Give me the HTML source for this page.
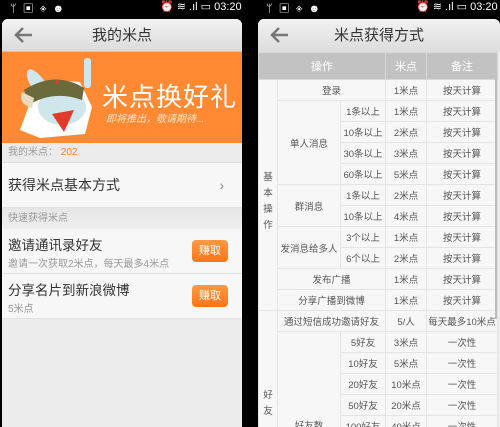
<!DOCTYPE html>
<html><head><meta charset="utf-8"><style>
*{margin:0;padding:0;box-sizing:border-box}
body{width:500px;height:427px;background:#000;position:relative;overflow:hidden;font-family:"Liberation Sans","Noto Sans CJK SC",sans-serif}
.sb{position:absolute;top:0;height:18px;color:#fff;font-size:12px}
.panel{position:absolute;top:19px;bottom:0;background:#ececec;border-radius:6px 6px 0 0;overflow:hidden}
.tb{height:33px;background:linear-gradient(#f2f2f2,#dcdcdc);border-bottom:1px solid #c8c8c8;position:relative;text-align:center;font-size:15px;line-height:33px;color:#333}
.back{position:absolute;left:10px;top:6px}
.banner{height:91px;background:#ff8a33;position:relative;overflow:hidden}
.row{background:#f7f7f7;border-bottom:1px solid #e2e2e2;position:relative}
.btn{position:absolute;right:14px;top:11px;width:36px;height:22px;border-radius:4px;background:linear-gradient(#ff9a40,#fb7418);color:#fff;font-size:11px;line-height:22px;text-align:center}
table{border-collapse:collapse;width:239px;font-size:9.5px;color:#555;text-align:center;table-layout:fixed}
td,th{border:1px solid #e4e4e4;height:21px;padding:0;background:#f7f7f7;font-weight:normal;white-space:nowrap;overflow:hidden}
th{background:#c2c2c2;color:#fff;height:27px;font-size:11px;border-color:#d8d8d8}
</style></head><body>
<div class="sb" style="left:10px;width:240px;font-size:11px">ᛘ &nbsp;▣ &nbsp;◈ &nbsp;☻<span style="position:absolute;left:150px">⏰ ≋ .ıl ▭ 03:20</span></div>
<div class="sb" style="left:266px;width:234px;font-size:11px">ᛘ &nbsp;▣ &nbsp;◈ &nbsp;☻<span style="position:absolute;left:150px">⏰ ≋ .ıl ▭ 03:20</span></div>

<div class="panel" style="left:2px;width:240px">
 <div class="tb"><svg class="back" width="22" height="20"><path d="M20 10H4M11 3L4 10l7 7" stroke="#777" stroke-width="2.5" fill="none"/></svg>我的米点</div>
 <div class="banner">
  <svg width="100" height="91" style="position:absolute;left:8px;top:0">
   <path d="M10 78 L22 45 L40 28 L70 30 L82 55 L75 82 L30 86Z" fill="#fff"/>
   <ellipse cx="28" cy="32" rx="7" ry="17" fill="#cfe6ea" transform="rotate(-35 28 32)"/>
   <ellipse cx="52" cy="55" rx="24" ry="18" fill="#cfe6ea"/>
   <path d="M14 38 Q45 18 74 36 L72 48 Q45 38 20 52Z" fill="#6b6a3c"/>
   <path d="M12 40 Q8 52 22 56 L24 46Z" fill="#e8dcc0"/>
   <circle cx="47" cy="30" r="2" fill="#e03a2a"/>
   <path d="M42 62 L64 58 L54 80Z" fill="#e03a2a"/>
   <rect x="74" y="6" width="7" height="30" rx="3" fill="#cfe6ea"/>
  </svg>
  <div style="position:absolute;left:100px;top:25px;color:#fff;font-size:26px;letter-spacing:1px;white-space:nowrap">米点换好礼</div>
  <div style="position:absolute;left:104px;top:58px;color:#ffe7cc;font-size:10px;font-style:italic;white-space:nowrap">即将推出，敬请期待...</div>
 </div>
 <div style="height:20px;background:#ebebeb;font-size:10px;color:#999;line-height:20px;padding-left:6px;border-bottom:1px solid #e0e0e0">我的米点： <span style="color:#f08030">202</span></div>
 <div class="row" style="height:45px;font-size:14px;line-height:44px;padding-left:6px;color:#333">获得米点基本方式<span style="position:absolute;right:18px;color:#888">›</span></div>
 <div style="height:21px;background:linear-gradient(#e6e6e6,#eeeeee);font-size:10px;color:#999;line-height:21px;padding-left:6px">快速获得米点</div>
 <div class="row" style="height:45px;padding:5px 6px"><div style="font-size:13.5px;color:#333">邀请通讯录好友</div><div style="font-size:10px;color:#999;margin-top:1px">邀请一次获取2米点，每天最多4米点</div><div class="btn">赚取</div></div>
 <div class="row" style="height:45px;padding:5px 6px"><div style="font-size:13.5px;color:#333">分享名片到新浪微博</div><div style="font-size:10px;color:#999;margin-top:1px">5米点</div><div class="btn">赚取</div></div>
</div>

<div class="panel" style="left:258px;width:242px">
 <div class="tb" style="border-bottom:none"><svg class="back" width="22" height="20"><path d="M20 10H4M11 3L4 10l7 7" stroke="#777" stroke-width="2.5" fill="none"/></svg>米点获得方式</div>
 <table>
  <colgroup><col style="width:19px"><col style="width:63px"><col style="width:45px"><col style="width:41px"><col style="width:71px"></colgroup>
  <tr><th colspan="3">操作</th><th>米点</th><th>备注</th></tr>
  <tr><td rowspan="11" style="line-height:16px;padding-top:14px">基<br>本<br>操<br>作</td><td colspan="2">登录</td><td>1米点</td><td>按天计算</td></tr>
  <tr><td rowspan="4">单人消息</td><td>1条以上</td><td>1米点</td><td>按天计算</td></tr>
  <tr><td>10条以上</td><td>2米点</td><td>按天计算</td></tr>
  <tr><td>30条以上</td><td>3米点</td><td>按天计算</td></tr>
  <tr><td>60条以上</td><td>5米点</td><td>按天计算</td></tr>
  <tr><td rowspan="2">群消息</td><td>1条以上</td><td>2米点</td><td>按天计算</td></tr>
  <tr><td>10条以上</td><td>4米点</td><td>按天计算</td></tr>
  <tr><td rowspan="2">发消息给多人</td><td>3个以上</td><td>1米点</td><td>按天计算</td></tr>
  <tr><td>6个以上</td><td>2米点</td><td>按天计算</td></tr>
  <tr><td colspan="2">发布广播</td><td>1米点</td><td>按天计算</td></tr>
  <tr><td colspan="2">分享广播到微博</td><td>1米点</td><td>按天计算</td></tr>
  <tr><td rowspan="7" style="line-height:16px;vertical-align:bottom;padding-bottom:0">好<br>友<br>&nbsp;</td><td colspan="2">通过短信成功邀请好友</td><td>5/人</td><td>每天最多10米点</td></tr>
  <tr><td rowspan="6" style="vertical-align:bottom;padding-bottom:4px">好友数</td><td>5好友</td><td>3米点</td><td>一次性</td></tr>
  <tr><td>10好友</td><td>5米点</td><td>一次性</td></tr>
  <tr><td>20好友</td><td>10米点</td><td>一次性</td></tr>
  <tr><td>50好友</td><td>20米点</td><td>一次性</td></tr>
  <tr><td>100好友</td><td>40米点</td><td>一次性</td></tr>
 </table>
 <div style="position:absolute;right:3px;top:60px;width:2px;height:240px;background:#bbb"></div>
</div>
</body></html>
